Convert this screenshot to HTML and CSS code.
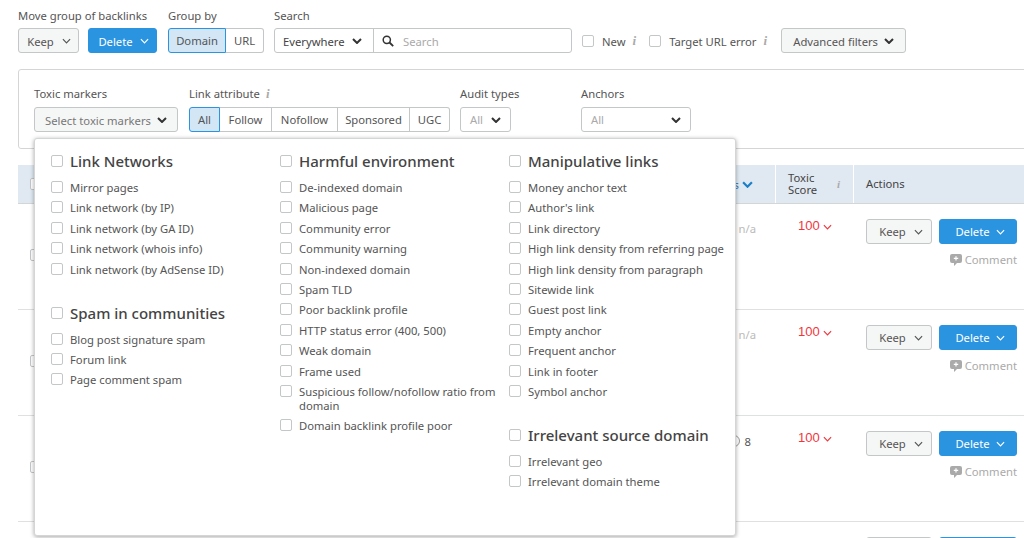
FILE: index.html
```html
<!DOCTYPE html>
<html lang="en">
<head>
    <meta charset="UTF-8" />
    <title>Backlink Audit</title>
    <link rel="stylesheet" href="styles.css">
</head>
<body>
    <svg class="defs" width="0" height="0">
        <symbol id="chev" viewBox="0 0 10 6"><path d="M1 1l4 4 4-4" fill="none" stroke="currentColor" stroke-width="1.3"/></symbol>
        <symbol id="chev-bold" viewBox="0 0 10 6"><path d="M1 1l4 4 4-4" fill="none" stroke="currentColor" stroke-width="2"/></symbol>
        <symbol id="bubble" viewBox="0 0 12 12"><path d="M2 0h8a2 2 0 0 1 2 2v5a2 2 0 0 1-2 2H7l-3 3V9H2a2 2 0 0 1-2-2V2a2 2 0 0 1 2-2z" fill="currentColor"/><path d="M6 2.2v4.4M3.8 4.4h4.4" stroke="#fff" stroke-width="1.2"/></symbol>
    </svg>

    <div class="toolbar">
        <div class="field">
            <div class="label">Move group of backlinks</div>
            <div class="controls">
                <button class="btn keep-top">Keep <svg class="ic"><use href="#chev"/></svg></button>
                <button class="btn primary delete-top">Delete <svg class="ic"><use href="#chev"/></svg></button>
            </div>
        </div>
        <div class="field">
            <div class="label">Group by</div>
            <div class="segments">
                <span class="seg active w-domain">Domain</span><span class="seg w-url">URL</span>
            </div>
        </div>
        <div class="field">
            <div class="label">Search</div>
            <div class="search">
                <span class="search-where">Everywhere <svg class="ic-bold"><use href="#chev-bold"/></svg></span>
                <span class="search-input">
                    <svg class="magnifier" viewBox="0 0 12 12"><circle cx="4.8" cy="4.8" r="3.6" fill="none" stroke="#333" stroke-width="1.5"/><path d="M7.5 7.5l3.7 3.7" stroke="#333" stroke-width="1.8"/></svg>
                    Search
                </span>
            </div>
        </div>
        <div class="checks">
            <span class="box"></span><span class="check-text">New</span><span class="info">i</span>
            <span class="box box-second"></span><span class="check-text">Target URL error</span><span class="info">i</span>
        </div>
        <button class="btn advanced">Advanced filters <svg class="ic-bold"><use href="#chev-bold"/></svg></button>
    </div>

    <div class="filters">
        <div class="field f-toxic">
            <div class="label">Toxic markers</div>
            <button class="btn toxic-select">Select toxic markers <svg class="ic-bold"><use href="#chev-bold"/></svg></button>
        </div>
        <div class="field f-attr">
            <div class="label">Link attribute <span class="info">i</span></div>
            <div class="segments">
                <span class="seg active w-all">All</span><span class="seg w-follow">Follow</span><span class="seg w-nofollow">Nofollow</span><span class="seg w-sponsored">Sponsored</span><span class="seg w-ugc">UGC</span>
            </div>
        </div>
        <div class="field f-audit">
            <div class="label">Audit types</div>
            <div class="select audit-select"><span>All</span><svg class="ic-bold"><use href="#chev-bold"/></svg></div>
        </div>
        <div class="field">
            <div class="label">Anchors</div>
            <div class="select anchors-select"><span>All</span><svg class="ic-bold"><use href="#chev-bold"/></svg></div>
        </div>
    </div>

    <div class="table">
        <div class="thead">
            <div class="th th-main"><span class="box"></span><span class="sort-tail">s <svg class="ic-sort"><use href="#chev-bold"/></svg></span></div>
            <div class="th th-score"><span>Toxic<br>Score</span><span class="info">i</span></div>
            <div class="th th-actions">Actions</div>
        </div>
        <div class="row">
            <div class="cell-main"><span class="box"></span><span class="muted">n/a</span></div>
            <div class="score">100 <svg class="ic"><use href="#chev"/></svg></div>
            <div class="actions">
                <div class="action-btns">
                    <button class="btn keep">Keep <svg class="ic"><use href="#chev"/></svg></button>
                    <button class="btn primary delete">Delete <svg class="ic"><use href="#chev"/></svg></button>
                </div>
                <div class="comment"><svg class="bubble"><use href="#bubble"/></svg>Comment</div>
            </div>
        </div>
        <div class="row">
            <div class="cell-main"><span class="box"></span><span class="muted">n/a</span></div>
            <div class="score">100 <svg class="ic"><use href="#chev"/></svg></div>
            <div class="actions">
                <div class="action-btns">
                    <button class="btn keep">Keep <svg class="ic"><use href="#chev"/></svg></button>
                    <button class="btn primary delete">Delete <svg class="ic"><use href="#chev"/></svg></button>
                </div>
                <div class="comment"><svg class="bubble"><use href="#bubble"/></svg>Comment</div>
            </div>
        </div>
        <div class="row">
            <div class="cell-main"><span class="box"></span><span class="count">8</span></div>
            <div class="score">100 <svg class="ic"><use href="#chev"/></svg></div>
            <div class="actions">
                <div class="action-btns">
                    <button class="btn keep">Keep <svg class="ic"><use href="#chev"/></svg></button>
                    <button class="btn primary delete">Delete <svg class="ic"><use href="#chev"/></svg></button>
                </div>
                <div class="comment"><svg class="bubble"><use href="#bubble"/></svg>Comment</div>
            </div>
        </div>
        <!-- only the top edge of the next row's buttons is in view -->
        <div class="row row-cut">
            <div class="cell-main"></div>
            <div class="score"></div>
            <div class="actions">
                <div class="action-btns">
                    <span class="btn keep"></span>
                    <span class="btn primary delete"></span>
                </div>
            </div>
        </div>
    </div>

    <!-- open "Select toxic markers" menu -->
    <div class="menu">
        <div class="menu-col col-1">
            <div class="group">
                <div class="heading"><span class="box"></span>Link Networks</div>
                <div class="item"><span class="box"></span>Mirror pages</div>
                <div class="item"><span class="box"></span>Link network (by IP)</div>
                <div class="item"><span class="box"></span>Link network (by GA ID)</div>
                <div class="item"><span class="box"></span>Link network (whois info)</div>
                <div class="item"><span class="box"></span>Link network (by AdSense ID)</div>
            </div>
            <div class="group">
                <div class="heading"><span class="box"></span>Spam in communities</div>
                <div class="item"><span class="box"></span>Blog post signature spam</div>
                <div class="item"><span class="box"></span>Forum link</div>
                <div class="item"><span class="box"></span>Page comment spam</div>
            </div>
        </div>
        <div class="menu-col col-2">
            <div class="group">
                <div class="heading"><span class="box"></span>Harmful environment</div>
                <div class="item"><span class="box"></span>De-indexed domain</div>
                <div class="item"><span class="box"></span>Malicious page</div>
                <div class="item"><span class="box"></span>Community error</div>
                <div class="item"><span class="box"></span>Community warning</div>
                <div class="item"><span class="box"></span>Non-indexed domain</div>
                <div class="item"><span class="box"></span>Spam TLD</div>
                <div class="item"><span class="box"></span>Poor backlink profile</div>
                <div class="item"><span class="box"></span>HTTP status error (400, 500)</div>
                <div class="item"><span class="box"></span>Weak domain</div>
                <div class="item"><span class="box"></span>Frame used</div>
                <div class="item"><span class="box"></span><span>Suspicious follow/nofollow ratio from domain</span></div>
                <div class="item"><span class="box"></span>Domain backlink profile poor</div>
            </div>
        </div>
        <div class="menu-col col-3">
            <div class="group">
                <div class="heading"><span class="box"></span>Manipulative links</div>
                <div class="item"><span class="box"></span>Money anchor text</div>
                <div class="item"><span class="box"></span>Author's link</div>
                <div class="item"><span class="box"></span>Link directory</div>
                <div class="item"><span class="box"></span>High link density from referring page</div>
                <div class="item"><span class="box"></span>High link density from paragraph</div>
                <div class="item"><span class="box"></span>Sitewide link</div>
                <div class="item"><span class="box"></span>Guest post link</div>
                <div class="item"><span class="box"></span>Empty anchor</div>
                <div class="item"><span class="box"></span>Frequent anchor</div>
                <div class="item"><span class="box"></span>Link in footer</div>
                <div class="item"><span class="box"></span>Symbol anchor</div>
            </div>
            <div class="group">
                <div class="heading"><span class="box"></span>Irrelevant source domain</div>
                <div class="item"><span class="box"></span>Irrelevant geo</div>
                <div class="item"><span class="box"></span>Irrelevant domain theme</div>
            </div>
        </div>
    </div>
</body>
</html>
```

FILE: styles.css
```css
html, body {
    height: 538px;
    overflow: hidden;
}

body {
    font-family: "Noto Sans", "Open Sans", sans-serif;
    font-size: 11.25px;
    color: #555;
    background-color: #fff;
    margin: 0;
    position: relative;
}

.defs {
    position: absolute;
}

.toolbar {
    display: flex;
    align-items: flex-end;
    height: 53px;
    padding-left: 18px;
}

.field {
    display: flex;
    flex-direction: column;
}

.label {
    height: 13px;
    line-height: 13px;
    margin-bottom: 6px;
    white-space: nowrap;
}

.filters .label {
    margin-bottom: 7px;
}

.controls {
    display: flex;
    gap: 9px;
    margin-right: 11px;
}

.btn {
    font: inherit;
    box-sizing: border-box;
    height: 25px;
    padding: 1px 0 0;
    color: #555;
    background-color: #f5f6f6;
    border: 1px solid #c4c7c7;
    border-radius: 3px;
    display: flex;
    align-items: center;
    justify-content: center;
    gap: 6px;
    white-space: nowrap;
}

.btn.primary {
    color: #fff;
    background-color: #2b94e1;
    border-color: #2b94e1;
}

.ic {
    width: 9px;
    height: 6px;
}

.ic-bold {
    width: 10px;
    height: 6px;
    color: #333;
}

.keep-top {
    width: 61px;
    gap: 8px;
    padding-left: 1px;
}

.delete-top {
    width: 69px;
    gap: 7px;
    padding-left: 2px;
}

.segments {
    display: flex;
    height: 25px;
    box-sizing: border-box;
    margin-right: 10px;
}

.seg {
    box-sizing: border-box;
    display: flex;
    align-items: center;
    justify-content: center;
    border: 1px solid #c4c7c7;
    border-left-width: 0;
}

.seg:first-child {
    border-left-width: 1px;
    border-radius: 3px 0 0 3px;
}

.seg:last-child {
    border-radius: 0 3px 3px 0;
}

.seg.active {
    background-color: #d2e6f6;
    border: 1px solid #2b94e1;
}

.w-domain { width: 58px; }
.w-url { width: 38px; }
.w-all { width: 31px; }
.w-follow { width: 52px; }
.w-nofollow { width: 66px; }
.w-sponsored { width: 72px; }
.w-ugc { width: 40px; }

.search {
    display: flex;
    width: 298px;
    height: 25px;
    box-sizing: border-box;
    padding-top: 0;
    border: 1px solid #c4c7c7;
    border-radius: 3px;
}

.search-where {
    width: 99px;
    box-sizing: border-box;
    border-right: 1px solid #c4c7c7;
    display: flex;
    align-items: center;
    gap: 7px;
    padding: 1px 0 0 8px;
    color: #444;
}

.search-input {
    display: flex;
    align-items: center;
    gap: 9px;
    padding: 1px 0 0 8px;
    color: #aaa;
}

.magnifier {
    width: 12px;
    height: 12px;
}

.checks {
    display: flex;
    align-items: center;
    height: 25px;
    padding-top: 1px;
    box-sizing: border-box;
    margin-left: 10px;
}

.box {
    display: block;
    flex: none;
    width: 12px;
    height: 12px;
    box-sizing: border-box;
    background-color: #fff;
    border: 1px solid #c4c7c7;
    border-radius: 2px;
}

.check-text {
    margin-left: 8px;
}

.box-second {
    margin-left: 13px;
}

.info {
    font-family: "Liberation Serif", serif;
    font-style: italic;
    font-weight: bold;
    font-size: 13px;
    color: #aaa;
    margin-left: 7px;
}

.advanced {
    width: 125px;
    margin-left: 14px;
}

.filters {
    display: flex;
    box-sizing: border-box;
    height: 80px;
    width: 1040px;
    margin: 16px 0 0 18px;
    padding: 17px 0 0 15px;
    border: 1px solid #d4d6d6;
    border-radius: 3px;
}

.f-toxic {
    margin-right: 11px;
}

.toxic-select {
    width: 144px;
    color: #777;
}

.f-attr .label .info {
    margin-left: 3px;
}

.f-audit {
    width: 121px;
}

.select {
    box-sizing: border-box;
    height: 25px;
    display: flex;
    align-items: center;
    justify-content: space-between;
    padding: 0 9px;
    color: #aaa;
    border: 1px solid #c4c7c7;
    border-radius: 3px;
}

.audit-select {
    width: 51px;
}

.anchors-select {
    width: 110px;
}

.table {
    margin: 16px 0 0 18px;
}

.thead {
    display: grid;
    grid-template-columns: 757px 78px 171px;
    height: 39px;
    box-sizing: border-box;
    background-color: #e0e8f1;
    border-bottom: 1px solid #d4d6d6;
}

.th {
    display: flex;
    align-items: center;
    color: #444;
    border-left: 1px solid #fff;
}

.th-main {
    border-left: 0;
    padding-left: 12px;
    justify-content: space-between;
}

.sort-tail {
    display: flex;
    align-items: center;
    gap: 3px;
    color: #2b7fc4;
    margin-right: 22px;
}

.ic-sort {
    width: 11px;
    height: 7px;
    color: #1a7fc9;
}

.th-score {
    line-height: 12.5px;
    padding-left: 12px;
    justify-content: space-between;
    padding-right: 13px;
}

.th-score .info {
    margin: 0;
    font-size: 11px;
}

.th-actions {
    padding: 0 0 2px 12px;
}

.row {
    display: grid;
    grid-template-columns: 757px 78px 171px;
    height: 106px;
    box-sizing: border-box;
    border-bottom: 1px solid #dfe0e0;
}

.row-cut {
    height: 16px;
    border-bottom: 0;
    overflow: hidden;
}

.cell-main {
    display: flex;
    justify-content: space-between;
    padding: 45px 19px 0 12px;
}

.muted {
    color: #bbb;
    margin-top: -28px;
}

.count {
    display: flex;
    align-items: center;
    gap: 5px;
    height: 16px;
    color: #555;
    margin: -28px 5px 0 0;
}

.count::before {
    content: "";
    width: 12px;
    height: 12px;
    box-sizing: border-box;
    border: 1px solid #999;
    border-radius: 50%;
}

.score {
    font-family: "Liberation Sans", sans-serif;
    font-size: 13px;
    color: #f2353c;
    padding: 14px 0 0 23px;
    display: flex;
    align-items: flex-start;
    gap: 3px;
    white-space: nowrap;
}

.score .ic {
    margin-top: 6px;
}

.actions {
    padding: 15px 7px 0 13px;
}

.action-btns {
    display: flex;
    justify-content: space-between;
}

.keep {
    width: 66px;
    gap: 8px;
    padding: 0 0 0 4px;
}

.delete {
    width: 78px;
    padding: 0 0 0 4px;
}

.comment {
    display: flex;
    align-items: center;
    justify-content: flex-end;
    gap: 3px;
    margin-top: 8px;
    color: #aaa;
}

.bubble {
    width: 12px;
    height: 12px;
    color: #aaa;
}

.menu {
    position: absolute;
    left: 34px;
    top: 138px;
    box-sizing: border-box;
    width: 702px;
    height: 398px;
    padding: 14px 0 0 16px;
    display: flex;
    background-color: #fff;
    border: 1px solid #d4d6d6;
    border-radius: 3px;
    box-shadow: 0 1px 4px rgba(0, 0, 0, 0.35);
}

.col-1, .col-2 {
    width: 229px;
}

.col-3 {
    width: 220px;
}

.group {
    margin-bottom: 28px;
}

.heading {
    display: flex;
    align-items: center;
    gap: 7px;
    height: 16px;
    margin-bottom: 12px;
    font-size: 15px;
    font-weight: 500;
    color: #444;
    white-space: nowrap;
}

.item {
    display: flex;
    gap: 7px;
    line-height: 14px;
    margin-bottom: 6.4px;
}
```
